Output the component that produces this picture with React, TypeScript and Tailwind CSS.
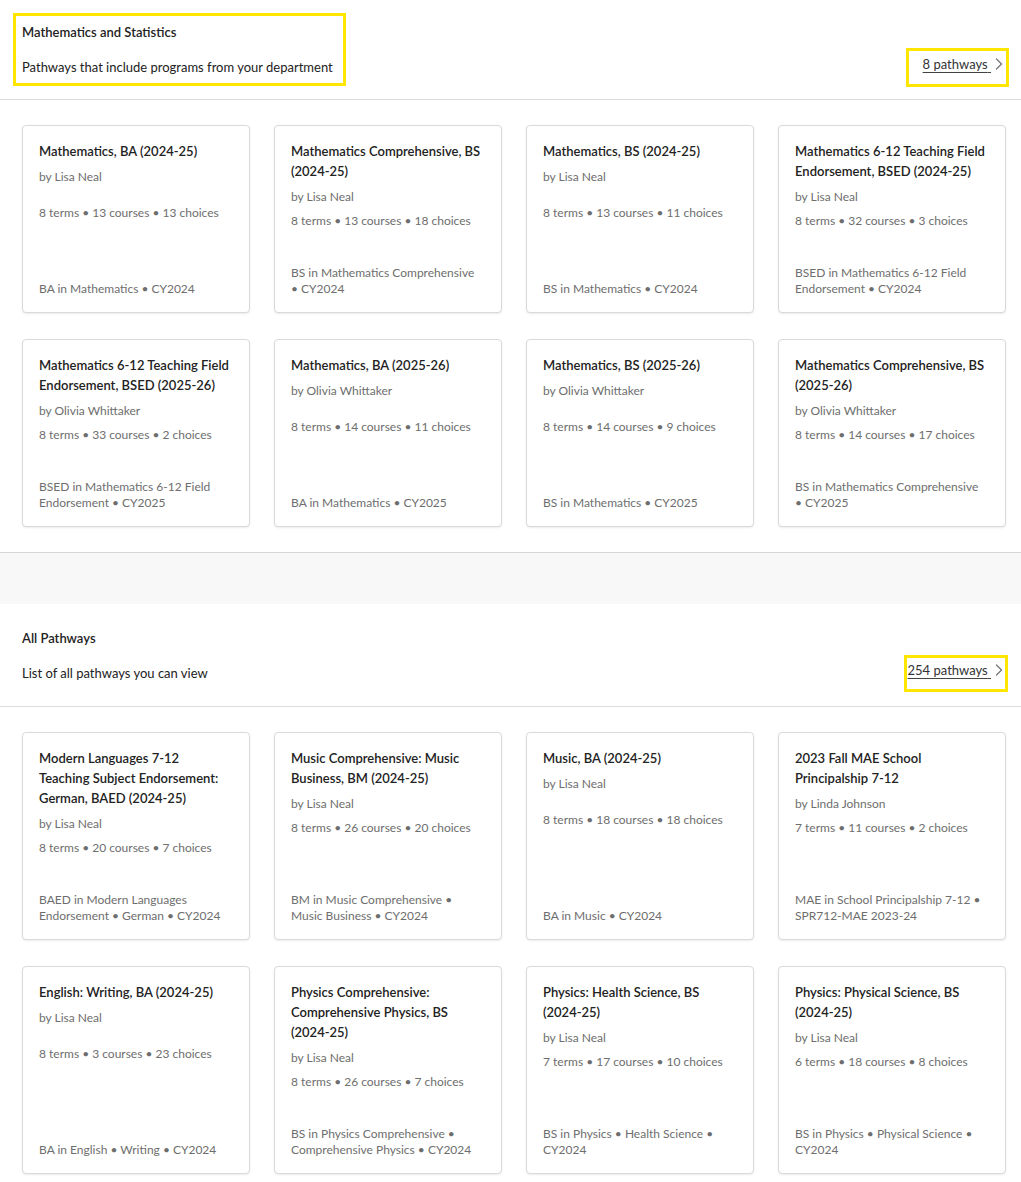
import React from 'react';

type Pathway = {
  title: string;
  author: string;
  terms: number;
  courses: number;
  choices: number;
  footer: string;
};

const departmentPathways: Pathway[] = [
  { title: 'Mathematics, BA (2024-25)', author: 'Lisa Neal', terms: 8, courses: 13, choices: 13, footer: 'BA in Mathematics • CY2024' },
  { title: 'Mathematics Comprehensive, BS (2024-25)', author: 'Lisa Neal', terms: 8, courses: 13, choices: 18, footer: 'BS in Mathematics Comprehensive • CY2024' },
  { title: 'Mathematics, BS (2024-25)', author: 'Lisa Neal', terms: 8, courses: 13, choices: 11, footer: 'BS in Mathematics • CY2024' },
  { title: 'Mathematics 6-12 Teaching Field Endorsement, BSED (2024-25)', author: 'Lisa Neal', terms: 8, courses: 32, choices: 3, footer: 'BSED in Mathematics 6-12 Field Endorsement • CY2024' },
  { title: 'Mathematics 6-12 Teaching Field Endorsement, BSED (2025-26)', author: 'Olivia Whittaker', terms: 8, courses: 33, choices: 2, footer: 'BSED in Mathematics 6-12 Field Endorsement • CY2025' },
  { title: 'Mathematics, BA (2025-26)', author: 'Olivia Whittaker', terms: 8, courses: 14, choices: 11, footer: 'BA in Mathematics • CY2025' },
  { title: 'Mathematics, BS (2025-26)', author: 'Olivia Whittaker', terms: 8, courses: 14, choices: 9, footer: 'BS in Mathematics • CY2025' },
  { title: 'Mathematics Comprehensive, BS (2025-26)', author: 'Olivia Whittaker', terms: 8, courses: 14, choices: 17, footer: 'BS in Mathematics Comprehensive • CY2025' },
];

const allPathways: Pathway[] = [
  { title: 'Modern Languages 7-12 Teaching Subject Endorsement: German, BAED (2024-25)', author: 'Lisa Neal', terms: 8, courses: 20, choices: 7, footer: 'BAED in Modern Languages Endorsement • German • CY2024' },
  { title: 'Music Comprehensive: Music Business, BM (2024-25)', author: 'Lisa Neal', terms: 8, courses: 26, choices: 20, footer: 'BM in Music Comprehensive • Music Business • CY2024' },
  { title: 'Music, BA (2024-25)', author: 'Lisa Neal', terms: 8, courses: 18, choices: 18, footer: 'BA in Music • CY2024' },
  { title: '2023 Fall MAE School Principalship 7-12', author: 'Linda Johnson', terms: 7, courses: 11, choices: 2, footer: 'MAE in School Principalship 7-12 • SPR712-MAE 2023-24' },
  { title: 'English: Writing, BA (2024-25)', author: 'Lisa Neal', terms: 8, courses: 3, choices: 23, footer: 'BA in English • Writing • CY2024' },
  { title: 'Physics Comprehensive: Comprehensive Physics, BS (2024-25)', author: 'Lisa Neal', terms: 8, courses: 26, choices: 7, footer: 'BS in Physics Comprehensive • Comprehensive Physics • CY2024' },
  { title: 'Physics: Health Science, BS (2024-25)', author: 'Lisa Neal', terms: 7, courses: 17, choices: 10, footer: 'BS in Physics • Health Science • CY2024' },
  { title: 'Physics: Physical Science, BS (2024-25)', author: 'Lisa Neal', terms: 6, courses: 18, choices: 8, footer: 'BS in Physics • Physical Science • CY2024' },
];

const Chevron = () => (
  <svg width="8" height="12" viewBox="0 0 8 12" className="ml-[4px] shrink-0" fill="none">
    <polyline points="1.5,1 6.5,6 1.5,11" stroke="#777" strokeWidth="1.3" strokeLinecap="round" strokeLinejoin="round" />
  </svg>
);

const PathwayCard: React.FC<{ pathway: Pathway }> = ({ pathway }) => (
  <div className="flex flex-col rounded-[4px] border border-[#dadada] bg-white pl-4 pr-[18px] pt-[15px] pb-[15px] shadow-[0_1px_2px_rgba(0,0,0,0.08)]">
    <div className="min-h-[58px]">
      <h3 className="text-[13px] font-semibold leading-5 text-[#222]">{pathway.title}</h3>
      <p className="mt-[6px] text-[12px] leading-5 text-[#6e6e6e]">by {pathway.author}</p>
    </div>
    <p className="mt-1 text-[12px] leading-5 text-[#6e6e6e]">
      {pathway.terms} terms • {pathway.courses} courses • {pathway.choices} choices
    </p>
    <p className="mt-auto pt-[34px] text-[12px] leading-4 text-[#6e6e6e]">{pathway.footer}</p>
  </div>
);

const PathwaySection: React.FC<{
  title: string;
  subtitle: string;
  count: string;
  highlightHeader?: boolean;
  linkBox: string;
  pathways: Pathway[];
  headerPad: string;
  last?: boolean;
}> = ({ title, subtitle, count, highlightHeader, linkBox, pathways, headerPad, last }) => (
  <section className={last ? 'bg-white' : 'bg-white border-b border-[#d6d6d6] shadow-[0_2px_3px_rgba(0,0,0,0.05)]'}>
    <div className={`flex items-end justify-between border-b border-[#dcdcdc] pl-[22px] pr-[18px] ${headerPad}`}>
      <div className="relative w-fit">
        {highlightHeader && (
          <span className="pointer-events-none absolute -left-[9px] -right-[13px] -top-[10px] -bottom-[10px] border-[3px] border-[#ffe600]" />
        )}
        <h2 className="text-[13px] font-semibold leading-[18px] text-[#222]">{title}</h2>
        <p className="mt-[17px] text-[13px] leading-[18px] text-[#222]">{subtitle}</p>
      </div>
      <a href="#" className="relative mb-[3px] flex items-center text-[13px] leading-[18px] text-[#333]">
        <span className={`pointer-events-none absolute border-[3px] border-[#ffe600] ${linkBox}`} />
        <span className="underline decoration-[#444] underline-offset-[3px]">{count}&nbsp;</span>
        <Chevron />
      </a>
    </div>
    <div className="grid grid-cols-4 gap-x-6 gap-y-[26px] pl-[22px] pr-[15px] pt-[25px] pb-[25px]">
      {pathways.map((p, i) => (
        <PathwayCard key={i} pathway={p} />
      ))}
    </div>
  </section>
);

const App: React.FC = () => {
  return (
    <div className="min-h-screen bg-white" style={{ fontFamily: '"Segoe UI", Lato, "Noto Sans", sans-serif' }}>
      <PathwaySection
        title="Mathematics and Statistics"
        subtitle="Pathways that include programs from your department"
        count="8 pathways"
        highlightHeader
        linkBox="-left-[17px] -right-[6px] -top-[7px] -bottom-[14px]"
        pathways={departmentPathways}
        headerPad="pt-[23px] pb-[23px]"
      />
      <div className="h-[51px] bg-[#f8f8f8]" />
      <PathwaySection
        title="All Pathways"
        subtitle="List of all pathways you can view"
        count="254 pathways"
        linkBox="-left-[4px] -right-[5px] -top-[6px] -bottom-[13px]"
        pathways={allPathways}
        headerPad="pt-[25px] pb-[24px]"
        last
      />
    </div>
  );
};

export default App;
